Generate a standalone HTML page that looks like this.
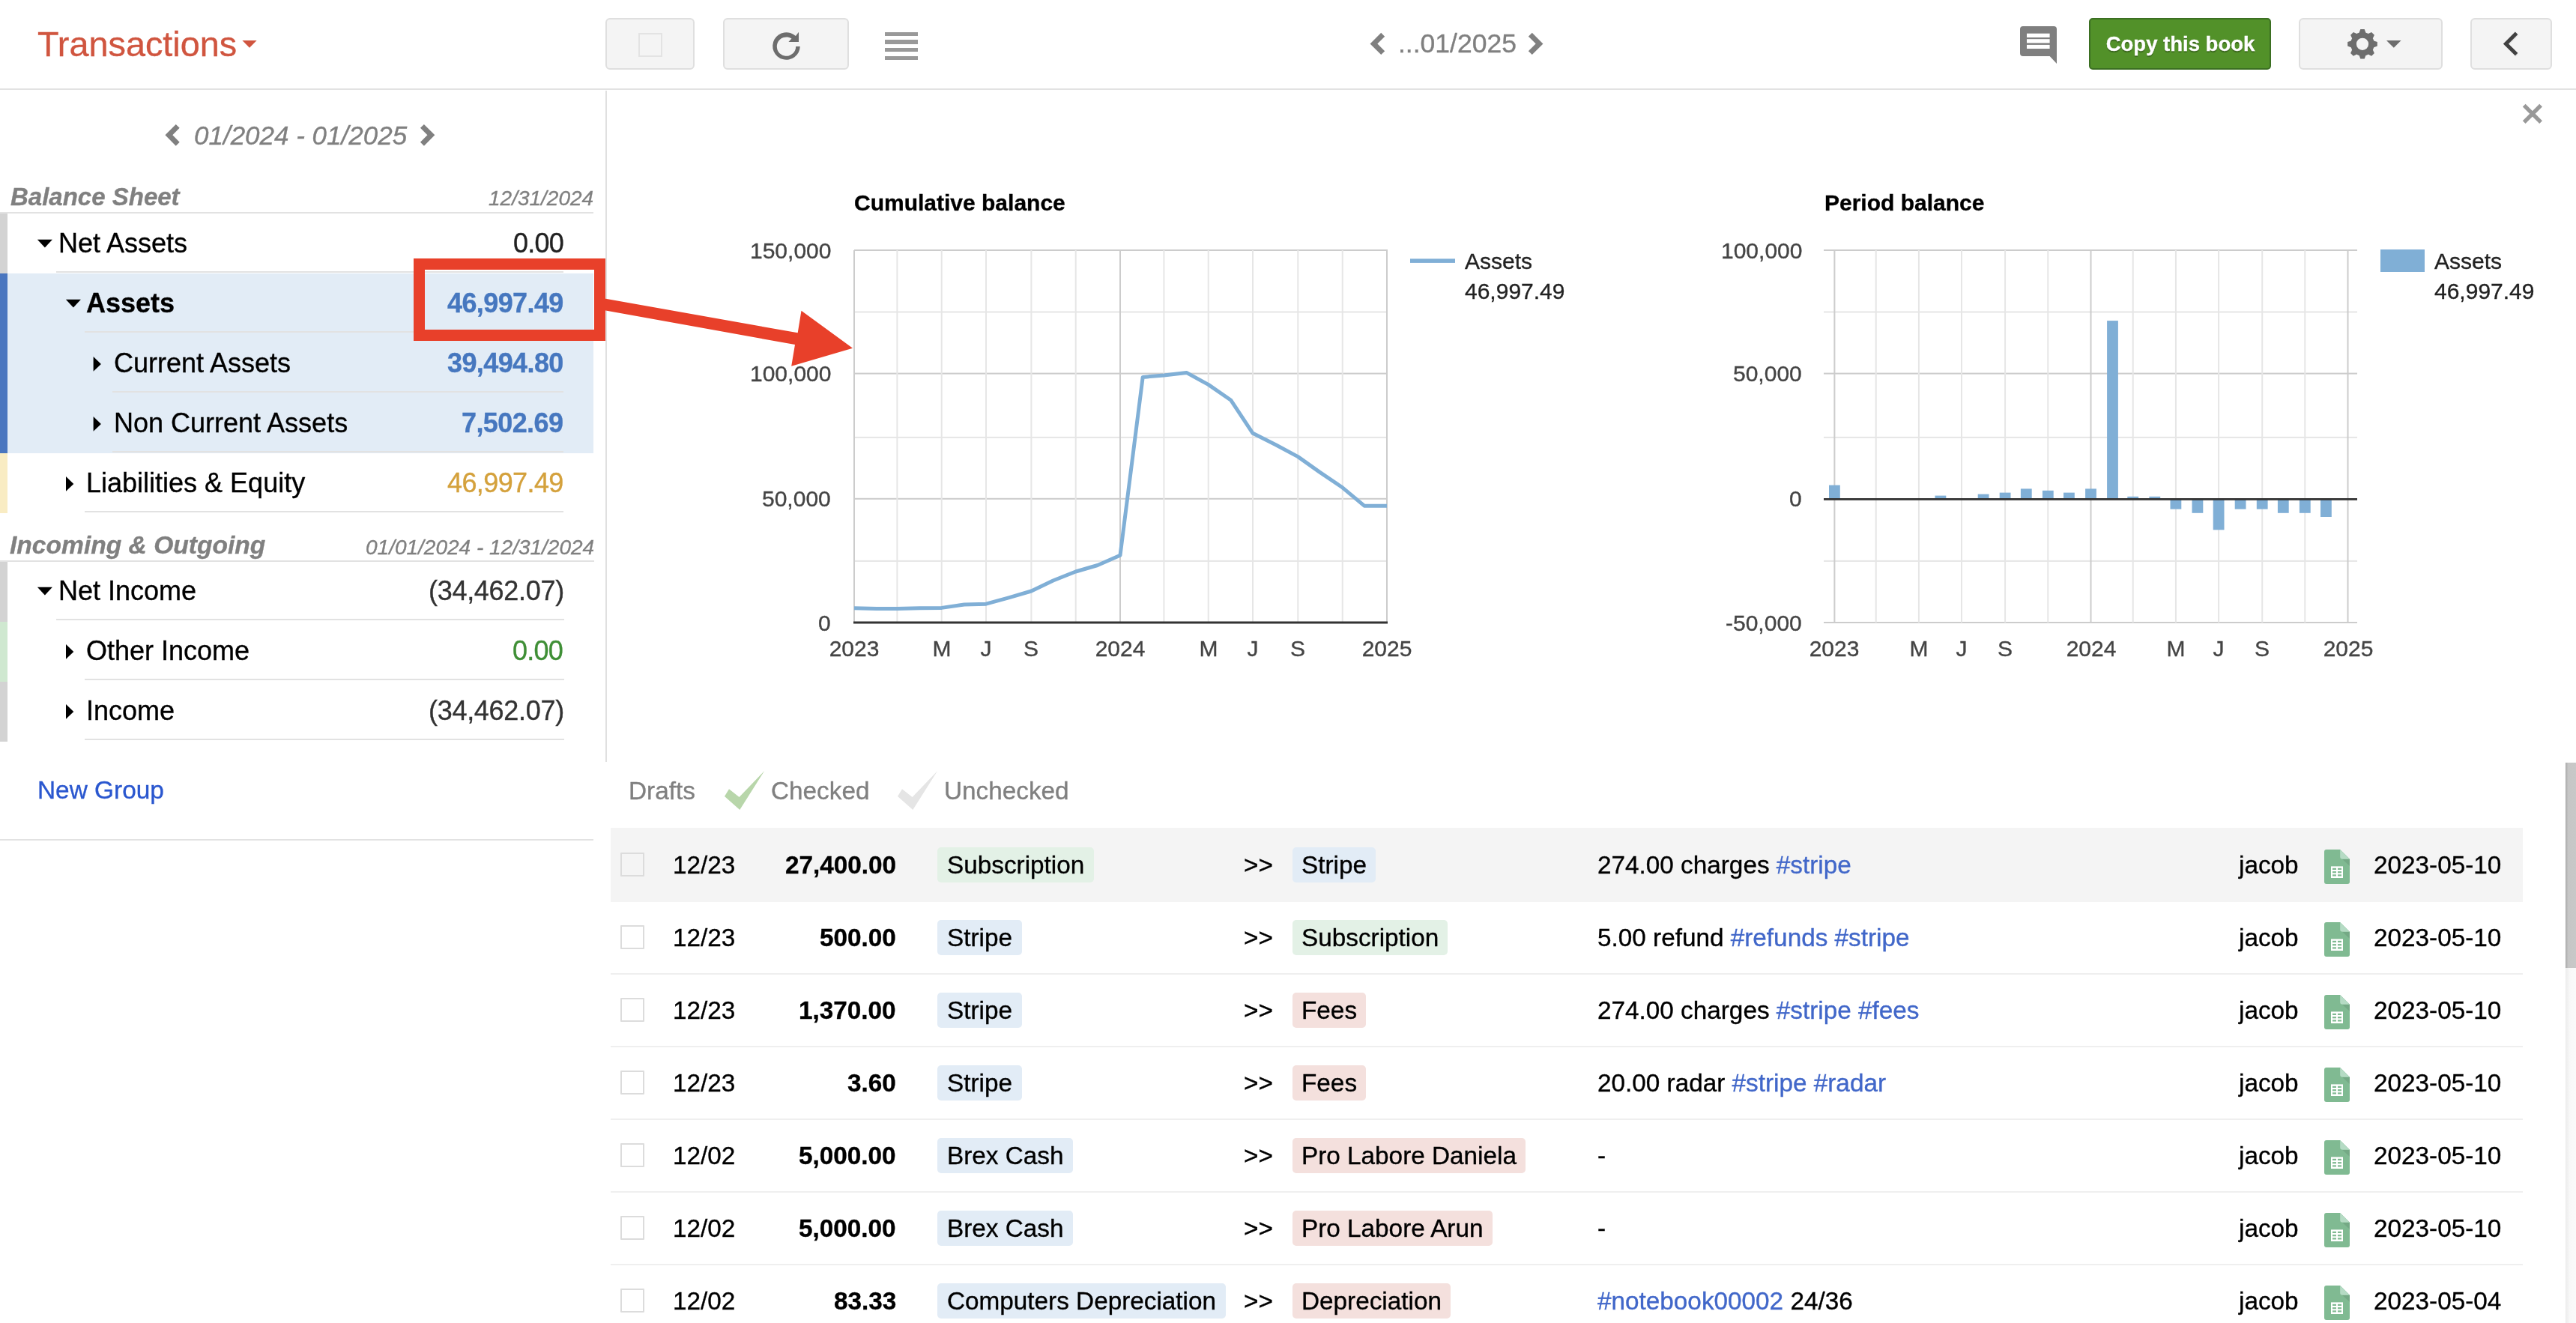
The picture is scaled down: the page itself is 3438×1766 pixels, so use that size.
<!DOCTYPE html><html><head><meta charset="utf-8"><style>
html,body{margin:0;padding:0;width:3438px;height:1766px;overflow:hidden;background:#fff;}
body{position:relative;font-family:"Liberation Sans",sans-serif;}
.t{position:absolute;white-space:nowrap;will-change:transform;-webkit-text-stroke:0.35px currentColor;}
.r{position:absolute;}
svg{position:absolute;left:0;top:0;}
</style></head><body>
<div class="t" style="left:50.0px;top:35.6px;font-size:46.8px;line-height:46.8px;color:#d0553f;font-weight:normal;font-style:normal;">Transactions</div>
<svg width="3438" height="125" style="left:0;top:0"><polygon points="323.4,54 342.6,54 333,63.7" fill="#d0553f"/></svg>
<div class="r" style="left:0px;top:118px;width:3438px;height:2px;background:#e2e2e2;"></div>
<div class="r" style="left:808px;top:24px;width:119px;height:69px;background:#f4f4f4;box-sizing:border-box;border:2px solid #dfdfdf;border-radius:6px;"></div>
<div class="r" style="left:851.5px;top:43.5px;width:32px;height:32px;background:transparent;box-sizing:border-box;border:2px solid #e3e3e3;"></div>
<div class="r" style="left:964.5px;top:24px;width:168px;height:69px;background:#f4f4f4;box-sizing:border-box;border:2px solid #dfdfdf;border-radius:6px;"></div>
<svg width="3438" height="125" style="left:0;top:0"><path d="M1067.8,62 A18.3,18.3 0 1 1 1062,48.1 L1066,42.7 L1066,56 L1052.4,56 L1056.5,51.5 A12.7,12.7 0 1 0 1062.2,62 Z" fill="#6d6d6d"/></svg>
<div class="r" style="left:1181.3px;top:42.7px;width:43.3px;height:5.3px;background:#999999;"></div>
<div class="r" style="left:1181.3px;top:53.4px;width:43.3px;height:5.3px;background:#999999;"></div>
<div class="r" style="left:1181.3px;top:64.1px;width:43.3px;height:5.3px;background:#999999;"></div>
<div class="r" style="left:1181.3px;top:74.8px;width:43.3px;height:5.3px;background:#999999;"></div>
<svg width="3438" height="125" style="left:0;top:0"><polyline points="1845.7,46.2 1833.5,58.4 1845.7,70.6" fill="none" stroke="#808080" stroke-width="7" stroke-linecap="butt"/><polyline points="2042.3,46.2 2054.5,58.4 2042.3,70.6" fill="none" stroke="#808080" stroke-width="7" stroke-linecap="butt"/></svg>
<div class="t" style="left:1866.2px;top:40.7px;font-size:35.5px;line-height:35.5px;color:#808080;font-weight:normal;font-style:normal;">...01/2025</div>
<svg width="3438" height="125" style="left:0;top:0"><path d="M2700,35 H2741 A4,4 0 0 1 2745,39 V85 L2735.6,75 H2700 A4,4 0 0 1 2696,71 V39 A4,4 0 0 1 2700,35 Z" fill="#7f7f7f"/><rect x="2705" y="44.7" width="30.6" height="5.3" fill="#fff"/><rect x="2705" y="52.2" width="30.6" height="5.2" fill="#fff"/><rect x="2705" y="59.9" width="30.6" height="5.1" fill="#fff"/></svg>
<div class="r" style="left:2788px;top:24px;width:243px;height:69px;background:#529129;box-sizing:border-box;border:2px solid #3b6f22;border-radius:5px;"></div>
<div class="t" style="left:1909.5px;width:2000px;text-align:center;top:45.2px;font-size:27.5px;line-height:27.5px;color:#ffffff;font-weight:bold;font-style:normal;text-shadow:0 1.5px 1px rgba(0,0,0,0.3);">Copy this book</div>
<div class="r" style="left:3068px;top:24px;width:192px;height:69px;background:#f4f4f4;box-sizing:border-box;border:2px solid #dfdfdf;border-radius:6px;"></div>
<svg width="3438" height="125" style="left:0;top:0"><polygon points="3148.64,43.61 3150.32,38.98 3155.68,38.98 3157.36,43.61 3158.21,43.88 3159.05,44.20 3159.86,44.57 3160.66,44.98 3165.12,42.89 3168.91,46.68 3166.82,51.14 3167.23,51.94 3167.60,52.75 3167.92,53.59 3168.19,54.44 3172.82,56.12 3172.82,61.48 3168.19,63.16 3167.92,64.01 3167.60,64.85 3167.23,65.66 3166.82,66.46 3168.91,70.92 3165.12,74.71 3160.66,72.62 3159.86,73.03 3159.05,73.40 3158.21,73.72 3157.36,73.99 3155.68,78.62 3150.32,78.62 3148.64,73.99 3147.79,73.72 3146.95,73.40 3146.14,73.03 3145.34,72.62 3140.88,74.71 3137.09,70.92 3139.18,66.46 3138.77,65.66 3138.40,64.85 3138.08,64.01 3137.81,63.16 3133.18,61.48 3133.18,56.12 3137.81,54.44 3138.08,53.59 3138.40,52.75 3138.77,51.94 3139.18,51.14 3137.09,46.68 3140.88,42.89 3145.34,44.98 3146.14,44.57 3146.95,44.20 3147.79,43.88" fill="#6d6d6d"/><circle cx="3153" cy="58.8" r="8.1" fill="#f4f4f4"/><polygon points="3185,54 3204.6,54 3194.8,63.8" fill="#6d6d6d"/></svg>
<div class="r" style="left:3297px;top:24px;width:109px;height:69px;background:#f4f4f4;box-sizing:border-box;border:2px solid #dfdfdf;border-radius:6px;"></div>
<svg width="3438" height="125" style="left:0;top:0"><polyline points="3359.5,45.5 3345.3,59.7 3359.5,73.9" fill="none" stroke="rgba(0,0,0,0.06)" stroke-width="5"/><polyline points="3358.6,44.2 3344.4,58.4 3358.6,72.6" fill="none" stroke="#414141" stroke-width="5"/></svg>
<div class="r" style="left:808px;top:121px;width:2px;height:896px;background:#e0e0e0;"></div>
<svg width="820" height="260" style="left:0;top:0"><polyline points="237.2,168.4 225.35,180.3 237.2,192.2" fill="none" stroke="#808080" stroke-width="7"/><polyline points="563.45,168.4 575.35,180.3 563.45,192.2" fill="none" stroke="#808080" stroke-width="7"/></svg>
<div class="t" style="left:259.0px;top:163.2px;font-size:35px;line-height:35px;color:#808080;font-weight:normal;font-style:italic;">01/2024 - 01/2025</div>
<div class="t" style="left:14.0px;top:246.1px;font-size:33px;line-height:33px;color:#808080;font-weight:bold;font-style:italic;">Balance Sheet</div>
<div class="t" style="right:2646.0px;top:250.8px;font-size:28px;line-height:28px;color:#808080;font-weight:normal;font-style:italic;">12/31/2024</div>
<div class="r" style="left:0px;top:283px;width:792px;height:2px;background:#e2e2e2;"></div>
<div class="r" style="left:0px;top:285px;width:10px;height:80px;background:#d3d3d3;"></div>
<div class="r" style="left:0px;top:365px;width:10px;height:240px;background:#4a76bf;"></div>
<div class="r" style="left:10px;top:365px;width:782px;height:240px;background:#e2ecf6;"></div>
<div class="r" style="left:0px;top:605px;width:10px;height:80px;background:#f9ecc3;"></div>
<div class="t" style="left:78.0px;top:306.5px;font-size:36px;line-height:36px;color:#000;font-weight:normal;font-style:normal;">Net Assets</div>
<div class="t" style="right:2686.2px;top:306.5px;font-size:36px;line-height:36px;color:#222;font-weight:normal;font-style:normal;letter-spacing:-0.8px;">0.00</div>
<div class="r" style="left:75px;top:362px;width:677px;height:2px;background:#e2e2e2;"></div>
<div class="t" style="left:115.0px;top:386.5px;font-size:36px;line-height:36px;color:#000;font-weight:bold;font-style:normal;">Assets</div>
<div class="t" style="right:2686.2px;top:386.5px;font-size:36px;line-height:36px;color:#4677bf;font-weight:bold;font-style:normal;letter-spacing:-0.6px;">46,997.49</div>
<div class="r" style="left:113px;top:442px;width:639px;height:2px;background:#e2e2e2;"></div>
<div class="t" style="left:152.0px;top:466.5px;font-size:36px;line-height:36px;color:#000;font-weight:normal;font-style:normal;">Current Assets</div>
<div class="t" style="right:2686.2px;top:466.5px;font-size:36px;line-height:36px;color:#4677bf;font-weight:bold;font-style:normal;letter-spacing:-0.6px;">39,494.80</div>
<div class="r" style="left:150px;top:522px;width:602px;height:2px;background:#e2e2e2;"></div>
<div class="t" style="left:152.0px;top:546.5px;font-size:36px;line-height:36px;color:#000;font-weight:normal;font-style:normal;">Non Current Assets</div>
<div class="t" style="right:2686.2px;top:546.5px;font-size:36px;line-height:36px;color:#4677bf;font-weight:bold;font-style:normal;letter-spacing:-0.6px;">7,502.69</div>
<div class="r" style="left:150px;top:602px;width:602px;height:2px;background:#e2e2e2;"></div>
<div class="t" style="left:115.0px;top:626.5px;font-size:36px;line-height:36px;color:#000;font-weight:normal;font-style:normal;">Liabilities &amp; Equity</div>
<div class="t" style="right:2686.2px;top:626.5px;font-size:36px;line-height:36px;color:#d4a13c;font-weight:normal;font-style:normal;letter-spacing:-0.6px;">46,997.49</div>
<div class="r" style="left:113px;top:682px;width:639px;height:2px;background:#e2e2e2;"></div>
<div class="t" style="left:13.0px;top:710.6px;font-size:33.6px;line-height:33.6px;color:#808080;font-weight:bold;font-style:italic;">Incoming &amp; Outgoing</div>
<div class="t" style="right:2644.5px;top:716.8px;font-size:28px;line-height:28px;color:#808080;font-weight:normal;font-style:italic;">01/01/2024 - 12/31/2024</div>
<div class="r" style="left:0px;top:748px;width:793px;height:2px;background:#e2e2e2;"></div>
<div class="r" style="left:0px;top:750px;width:10px;height:80px;background:#d3d3d3;"></div>
<div class="r" style="left:0px;top:830px;width:10px;height:80px;background:#cfe8d0;"></div>
<div class="r" style="left:0px;top:910px;width:10px;height:80px;background:#d3d3d3;"></div>
<div class="t" style="left:78.0px;top:770.5px;font-size:36px;line-height:36px;color:#000;font-weight:normal;font-style:normal;">Net Income</div>
<div class="t" style="right:2685.2px;top:770.5px;font-size:36px;line-height:36px;color:#333;font-weight:normal;font-style:normal;letter-spacing:-0.3px;">(34,462.07)</div>
<div class="r" style="left:75px;top:826px;width:678px;height:2px;background:#e2e2e2;"></div>
<div class="t" style="left:115.0px;top:850.5px;font-size:36px;line-height:36px;color:#000;font-weight:normal;font-style:normal;">Other Income</div>
<div class="t" style="right:2686.7px;top:850.5px;font-size:36px;line-height:36px;color:#3f8f36;font-weight:normal;font-style:normal;letter-spacing:-0.8px;">0.00</div>
<div class="r" style="left:113px;top:906px;width:640px;height:2px;background:#e2e2e2;"></div>
<div class="t" style="left:115.0px;top:930.5px;font-size:36px;line-height:36px;color:#000;font-weight:normal;font-style:normal;">Income</div>
<div class="t" style="right:2685.2px;top:930.5px;font-size:36px;line-height:36px;color:#333;font-weight:normal;font-style:normal;letter-spacing:-0.3px;">(34,462.07)</div>
<div class="r" style="left:113px;top:986px;width:640px;height:2px;background:#e2e2e2;"></div>
<svg width="820" height="1000" style="left:0;top:0"><polygon points="49.9,319.8 69.9,319.8 59.9,330.40000000000003" fill="#000"/><polygon points="87.9,399.8 107.9,399.8 97.9,410.40000000000003" fill="#000"/><polygon points="124.6,476 134.9,485.9 124.6,495.8" fill="#000"/><polygon points="124.6,556 134.9,565.9 124.6,575.8" fill="#000"/><polygon points="88,636 98.3,645.9 88,655.8" fill="#000"/><polygon points="49.9,783.8 69.9,783.8 59.9,794.4" fill="#000"/><polygon points="88,860 98.3,869.9 88,879.8" fill="#000"/><polygon points="88,940 98.3,949.9 88,959.8" fill="#000"/></svg>
<div class="t" style="left:50.0px;top:1037.7px;font-size:33.4px;line-height:33.4px;color:#2a57cf;font-weight:normal;font-style:normal;">New Group</div>
<div class="r" style="left:0px;top:1120px;width:792px;height:2px;background:#e2e2e2;"></div>
<div class="r" style="left:552px;top:345px;width:256px;height:110px;background:transparent;box-sizing:border-box;border:15px solid #e8402a;"></div>
<svg width="1200" height="520" style="left:0;top:0"><polygon points="807,398.6 1064.7,444.3 1069.5,414.7 1138,464.8 1056.2,488.8 1061,460 807,414.2" fill="#e8402a"/></svg>
<svg width="3438" height="200" style="left:0;top:0"><path d="M3368.7,140.6 L3391.1,163.2 M3391.1,140.6 L3368.7,163.2" stroke="#999" stroke-width="5.3"/></svg>
<div class="t" style="left:1140.0px;top:255.6px;font-size:30px;line-height:30px;color:#000;font-weight:bold;font-style:normal;">Cumulative balance</div>
<div class="t" style="left:1954.5px;top:334.1px;font-size:30px;line-height:30px;color:#222;font-weight:normal;font-style:normal;">Assets</div>
<div class="t" style="left:1954.5px;top:373.8px;font-size:30px;line-height:30px;color:#222;font-weight:normal;font-style:normal;">46,997.49</div>
<div class="t" style="right:2329.0px;top:319.6px;font-size:30px;line-height:30px;color:#444444;font-weight:normal;font-style:normal;">150,000</div>
<div class="t" style="right:2329.0px;top:484.2px;font-size:30px;line-height:30px;color:#444444;font-weight:normal;font-style:normal;">100,000</div>
<div class="t" style="right:2329.0px;top:651.4px;font-size:30px;line-height:30px;color:#444444;font-weight:normal;font-style:normal;">50,000</div>
<div class="t" style="right:2329.0px;top:816.6px;font-size:30px;line-height:30px;color:#444444;font-weight:normal;font-style:normal;">0</div>
<div class="t" style="left:140.0px;width:2000px;text-align:center;top:851.1px;font-size:30px;line-height:30px;color:#444444;font-weight:normal;font-style:normal;">2023</div>
<div class="t" style="left:256.7px;width:2000px;text-align:center;top:851.1px;font-size:30px;line-height:30px;color:#444444;font-weight:normal;font-style:normal;">M</div>
<div class="t" style="left:316.0px;width:2000px;text-align:center;top:851.1px;font-size:30px;line-height:30px;color:#444444;font-weight:normal;font-style:normal;">J</div>
<div class="t" style="left:376.4px;width:2000px;text-align:center;top:851.1px;font-size:30px;line-height:30px;color:#444444;font-weight:normal;font-style:normal;">S</div>
<div class="t" style="left:495.0px;width:2000px;text-align:center;top:851.1px;font-size:30px;line-height:30px;color:#444444;font-weight:normal;font-style:normal;">2024</div>
<div class="t" style="left:612.7px;width:2000px;text-align:center;top:851.1px;font-size:30px;line-height:30px;color:#444444;font-weight:normal;font-style:normal;">M</div>
<div class="t" style="left:672.0px;width:2000px;text-align:center;top:851.1px;font-size:30px;line-height:30px;color:#444444;font-weight:normal;font-style:normal;">J</div>
<div class="t" style="left:732.3px;width:2000px;text-align:center;top:851.1px;font-size:30px;line-height:30px;color:#444444;font-weight:normal;font-style:normal;">S</div>
<div class="t" style="left:851.0px;width:2000px;text-align:center;top:851.1px;font-size:30px;line-height:30px;color:#444444;font-weight:normal;font-style:normal;">2025</div>
<div class="t" style="left:2435.0px;top:255.6px;font-size:30px;line-height:30px;color:#000;font-weight:bold;font-style:normal;">Period balance</div>
<div class="t" style="left:3248.5px;top:334.1px;font-size:30px;line-height:30px;color:#222;font-weight:normal;font-style:normal;">Assets</div>
<div class="t" style="left:3248.5px;top:373.8px;font-size:30px;line-height:30px;color:#222;font-weight:normal;font-style:normal;">46,997.49</div>
<div class="t" style="right:1033.0px;top:319.6px;font-size:30px;line-height:30px;color:#444444;font-weight:normal;font-style:normal;">100,000</div>
<div class="t" style="right:1033.0px;top:484.2px;font-size:30px;line-height:30px;color:#444444;font-weight:normal;font-style:normal;">50,000</div>
<div class="t" style="right:1033.0px;top:651.4px;font-size:30px;line-height:30px;color:#444444;font-weight:normal;font-style:normal;">0</div>
<div class="t" style="right:1033.0px;top:816.6px;font-size:30px;line-height:30px;color:#444444;font-weight:normal;font-style:normal;">-50,000</div>
<div class="t" style="left:1448.4px;width:2000px;text-align:center;top:851.1px;font-size:30px;line-height:30px;color:#444444;font-weight:normal;font-style:normal;">2023</div>
<div class="t" style="left:1560.9px;width:2000px;text-align:center;top:851.1px;font-size:30px;line-height:30px;color:#444444;font-weight:normal;font-style:normal;">M</div>
<div class="t" style="left:1618.0px;width:2000px;text-align:center;top:851.1px;font-size:30px;line-height:30px;color:#444444;font-weight:normal;font-style:normal;">J</div>
<div class="t" style="left:1676.1px;width:2000px;text-align:center;top:851.1px;font-size:30px;line-height:30px;color:#444444;font-weight:normal;font-style:normal;">S</div>
<div class="t" style="left:1790.5px;width:2000px;text-align:center;top:851.1px;font-size:30px;line-height:30px;color:#444444;font-weight:normal;font-style:normal;">2024</div>
<div class="t" style="left:1903.9px;width:2000px;text-align:center;top:851.1px;font-size:30px;line-height:30px;color:#444444;font-weight:normal;font-style:normal;">M</div>
<div class="t" style="left:1961.1px;width:2000px;text-align:center;top:851.1px;font-size:30px;line-height:30px;color:#444444;font-weight:normal;font-style:normal;">J</div>
<div class="t" style="left:2019.2px;width:2000px;text-align:center;top:851.1px;font-size:30px;line-height:30px;color:#444444;font-weight:normal;font-style:normal;">S</div>
<div class="t" style="left:2133.5px;width:2000px;text-align:center;top:851.1px;font-size:30px;line-height:30px;color:#444444;font-weight:normal;font-style:normal;">2025</div>
<svg width="3438" height="1000" style="left:0;top:0"><rect x="1140" y="333.0" width="712" height="2" fill="#cccccc"/><rect x="1140" y="415.5" width="712" height="2" fill="#e6e6e6"/><rect x="1140" y="497.6" width="712" height="2" fill="#cccccc"/><rect x="1140" y="582.9" width="712" height="2" fill="#e6e6e6"/><rect x="1140" y="664.8" width="712" height="2" fill="#cccccc"/><rect x="1140" y="747.9" width="712" height="2" fill="#e6e6e6"/><rect x="1139.0" y="334" width="2" height="497" fill="#cccccc"/><rect x="1196.4" y="334" width="2" height="497" fill="#e6e6e6"/><rect x="1255.7" y="334" width="2" height="497" fill="#e6e6e6"/><rect x="1315.0" y="334" width="2" height="497" fill="#e6e6e6"/><rect x="1375.4" y="334" width="2" height="497" fill="#e6e6e6"/><rect x="1434.7" y="334" width="2" height="497" fill="#e6e6e6"/><rect x="1494.0" y="334" width="2" height="497" fill="#cccccc"/><rect x="1552.4" y="334" width="2" height="497" fill="#e6e6e6"/><rect x="1611.7" y="334" width="2" height="497" fill="#e6e6e6"/><rect x="1671.0" y="334" width="2" height="497" fill="#e6e6e6"/><rect x="1731.3" y="334" width="2" height="497" fill="#e6e6e6"/><rect x="1790.7" y="334" width="2" height="497" fill="#e6e6e6"/><rect x="1850.0" y="334" width="2" height="497" fill="#cccccc"/><rect x="1139" y="829.5" width="713" height="3" fill="#333"/><polyline points="1140.0,811.8 1170.2,812.6 1197.4,812.6 1227.5,811.8 1256.7,811.4 1286.9,807.0 1316.0,806.2 1346.2,797.8 1376.4,789.0 1405.5,775.0 1435.7,763.0 1464.9,754.5 1495.0,741.3 1525.2,503.4 1553.4,501.0 1583.5,497.4 1612.7,513.4 1642.9,534.3 1672.0,578.3 1702.2,593.5 1732.3,609.6 1761.5,630.4 1791.7,650.8 1820.8,675.2 1851.0,675.2" fill="none" stroke="#80afd6" stroke-width="5" stroke-linejoin="round"/><rect x="1882" y="345.4" width="60" height="5.5" fill="#80afd6"/><rect x="2434" y="333.0" width="712" height="2" fill="#cccccc"/><rect x="2434" y="415.5" width="712" height="2" fill="#e6e6e6"/><rect x="2434" y="497.6" width="712" height="2" fill="#cccccc"/><rect x="2434" y="582.9" width="712" height="2" fill="#e6e6e6"/><rect x="2434" y="747.9" width="712" height="2" fill="#e6e6e6"/><rect x="2434" y="830.0" width="712" height="2" fill="#cccccc"/><rect x="2447.4" y="334" width="2" height="497" fill="#cccccc"/><rect x="2502.7" y="334" width="2" height="497" fill="#e6e6e6"/><rect x="2559.9" y="334" width="2" height="497" fill="#e6e6e6"/><rect x="2617.0" y="334" width="2" height="497" fill="#e6e6e6"/><rect x="2675.1" y="334" width="2" height="497" fill="#e6e6e6"/><rect x="2732.3" y="334" width="2" height="497" fill="#e6e6e6"/><rect x="2789.5" y="334" width="2" height="497" fill="#cccccc"/><rect x="2845.7" y="334" width="2" height="497" fill="#e6e6e6"/><rect x="2902.9" y="334" width="2" height="497" fill="#e6e6e6"/><rect x="2960.1" y="334" width="2" height="497" fill="#e6e6e6"/><rect x="3018.2" y="334" width="2" height="497" fill="#e6e6e6"/><rect x="3075.3" y="334" width="2" height="497" fill="#e6e6e6"/><rect x="3132.5" y="334" width="2" height="497" fill="#cccccc"/><rect x="2441.0" y="647.6" width="14.8" height="18.8" fill="#80afd6"/><rect x="2470.1" y="665.0" width="14.8" height="1.4" fill="#80afd6"/><rect x="2496.3" y="665.0" width="14.8" height="1.4" fill="#80afd6"/><rect x="2525.3" y="665.0" width="14.8" height="1.4" fill="#80afd6"/><rect x="2553.5" y="665.0" width="14.8" height="1.4" fill="#80afd6"/><rect x="2582.5" y="661.6" width="14.8" height="4.8" fill="#80afd6"/><rect x="2610.6" y="665.0" width="14.8" height="1.4" fill="#80afd6"/><rect x="2639.7" y="659.6" width="14.8" height="6.8" fill="#80afd6"/><rect x="2668.7" y="657.6" width="14.8" height="8.8" fill="#80afd6"/><rect x="2696.9" y="652.4" width="14.8" height="14.0" fill="#80afd6"/><rect x="2725.9" y="654.8" width="14.8" height="11.6" fill="#80afd6"/><rect x="2754.0" y="657.6" width="14.8" height="8.8" fill="#80afd6"/><rect x="2783.1" y="652.4" width="14.8" height="14.0" fill="#80afd6"/><rect x="2812.1" y="428.1" width="14.8" height="238.3" fill="#80afd6"/><rect x="2839.3" y="662.8" width="14.8" height="3.6" fill="#80afd6"/><rect x="2868.4" y="662.8" width="14.8" height="3.6" fill="#80afd6"/><rect x="2896.5" y="666.4" width="14.8" height="13.2" fill="#80afd6"/><rect x="2925.5" y="666.4" width="14.8" height="18.4" fill="#80afd6"/><rect x="2953.7" y="666.4" width="14.8" height="40.9" fill="#80afd6"/><rect x="2982.7" y="666.4" width="14.8" height="13.2" fill="#80afd6"/><rect x="3011.8" y="666.4" width="14.8" height="13.2" fill="#80afd6"/><rect x="3039.9" y="666.4" width="14.8" height="18.4" fill="#80afd6"/><rect x="3068.9" y="666.4" width="14.8" height="18.4" fill="#80afd6"/><rect x="3097.0" y="666.4" width="14.8" height="23.6" fill="#80afd6"/><rect x="2434" y="665.0" width="712" height="2.8" fill="#333"/><rect x="3177" y="333" width="59" height="30" fill="#80afd6"/></svg>
<div class="t" style="left:838.5px;top:1038.8px;font-size:33.3px;line-height:33.3px;color:#808080;font-weight:normal;font-style:normal;">Drafts</div>
<svg width="3438" height="1200" style="left:0;top:0"><polygon points="967,1062.9 973,1053.3 986.6,1064.1 1020.2,1028.9 987.3,1081.1" fill="#b8d6aa"/><polygon points="1198,1062.9 1204,1053.3 1217.6,1064.1 1251.2,1028.9 1218.3,1081.1" fill="#e5e5e5"/></svg>
<div class="t" style="left:1029.0px;top:1038.8px;font-size:33.3px;line-height:33.3px;color:#808080;font-weight:normal;font-style:normal;">Checked</div>
<div class="t" style="left:1260.0px;top:1038.8px;font-size:33.3px;line-height:33.3px;color:#808080;font-weight:normal;font-style:normal;">Unchecked</div>
<div class="r" style="left:815px;top:1105px;width:2552px;height:99px;background:#f4f4f4;"></div>
<div class="r" style="left:828px;top:1138px;width:32px;height:32px;background:transparent;box-sizing:border-box;border:2px solid #dcdcdc;border-radius:1px;"></div>
<div class="t" style="left:897.5px;top:1137.8px;font-size:33.3px;line-height:33.3px;color:#000;font-weight:normal;font-style:normal;">12/23</div>
<div class="t" style="right:2242.0px;top:1137.8px;font-size:33.3px;line-height:33.3px;color:#000;font-weight:bold;font-style:normal;">27,400.00</div>
<div class="t" style="left:1251px;top:1130.8px;height:47px;line-height:47px;padding:0 13px;border-radius:5px;background:#e3f1e6;font-size:33.3px;color:#000">Subscription</div>
<div class="t" style="left:1660.0px;top:1137.8px;font-size:33.3px;line-height:33.3px;color:#000;font-weight:normal;font-style:normal;">&gt;&gt;</div>
<div class="t" style="left:1725px;top:1130.8px;height:47px;line-height:47px;padding:0 12px;border-radius:5px;background:#e2ecf6;font-size:33.3px;color:#000">Stripe</div>
<div class="t" style="left:2132.0px;top:1137.8px;font-size:33.3px;line-height:33.3px;color:#000;font-weight:normal;font-style:normal;">274.00 charges <span style="color:#4167c9">#stripe</span></div>
<div class="t" style="left:2988.0px;top:1137.8px;font-size:33.3px;line-height:33.3px;color:#000;font-weight:normal;font-style:normal;">jacob</div>
<div class="t" style="left:3168.0px;top:1137.8px;font-size:33.3px;line-height:33.3px;color:#000;font-weight:normal;font-style:normal;">2023-05-10</div>
<svg width="40" height="50" style="left:3102px;top:1133.8px"><path d="M3,0 H21.2 L34,12.8 V43 A3,3 0 0 1 31,46 H3 A3,3 0 0 1 0,43 V3 A3,3 0 0 1 3,0 Z" fill="#80ba92"/><path d="M24,12.8 H34 V22 Z" fill="#74a985"/><path d="M21.2,0 L34,12.8 H24.5 A3.3,3.3 0 0 1 21.2,9.5 Z" fill="#b5dbc4"/><rect x="9" y="22.4" width="16" height="15.6" fill="#fff"/><rect x="11" y="24.8" width="5" height="2.2" fill="#80ba92"/><rect x="18" y="24.8" width="5" height="2.2" fill="#80ba92"/><rect x="11" y="29.1" width="5" height="2.2" fill="#80ba92"/><rect x="18" y="29.1" width="5" height="2.2" fill="#80ba92"/><rect x="11" y="33.3" width="5" height="2.2" fill="#80ba92"/><rect x="18" y="33.3" width="5" height="2.2" fill="#80ba92"/></svg>
<div class="r" style="left:815px;top:1299px;width:2552px;height:2px;background:#efefef;"></div>
<div class="r" style="left:828px;top:1235px;width:32px;height:32px;background:transparent;box-sizing:border-box;border:2px solid #dcdcdc;border-radius:1px;"></div>
<div class="t" style="left:897.5px;top:1234.8px;font-size:33.3px;line-height:33.3px;color:#000;font-weight:normal;font-style:normal;">12/23</div>
<div class="t" style="right:2242.0px;top:1234.8px;font-size:33.3px;line-height:33.3px;color:#000;font-weight:bold;font-style:normal;">500.00</div>
<div class="t" style="left:1251px;top:1227.8px;height:47px;line-height:47px;padding:0 13px;border-radius:5px;background:#e2ecf6;font-size:33.3px;color:#000">Stripe</div>
<div class="t" style="left:1660.0px;top:1234.8px;font-size:33.3px;line-height:33.3px;color:#000;font-weight:normal;font-style:normal;">&gt;&gt;</div>
<div class="t" style="left:1725px;top:1227.8px;height:47px;line-height:47px;padding:0 12px;border-radius:5px;background:#e3f1e6;font-size:33.3px;color:#000">Subscription</div>
<div class="t" style="left:2132.0px;top:1234.8px;font-size:33.3px;line-height:33.3px;color:#000;font-weight:normal;font-style:normal;">5.00 refund <span style="color:#4167c9">#refunds #stripe</span></div>
<div class="t" style="left:2988.0px;top:1234.8px;font-size:33.3px;line-height:33.3px;color:#000;font-weight:normal;font-style:normal;">jacob</div>
<div class="t" style="left:3168.0px;top:1234.8px;font-size:33.3px;line-height:33.3px;color:#000;font-weight:normal;font-style:normal;">2023-05-10</div>
<svg width="40" height="50" style="left:3102px;top:1230.8px"><path d="M3,0 H21.2 L34,12.8 V43 A3,3 0 0 1 31,46 H3 A3,3 0 0 1 0,43 V3 A3,3 0 0 1 3,0 Z" fill="#80ba92"/><path d="M24,12.8 H34 V22 Z" fill="#74a985"/><path d="M21.2,0 L34,12.8 H24.5 A3.3,3.3 0 0 1 21.2,9.5 Z" fill="#b5dbc4"/><rect x="9" y="22.4" width="16" height="15.6" fill="#fff"/><rect x="11" y="24.8" width="5" height="2.2" fill="#80ba92"/><rect x="18" y="24.8" width="5" height="2.2" fill="#80ba92"/><rect x="11" y="29.1" width="5" height="2.2" fill="#80ba92"/><rect x="18" y="29.1" width="5" height="2.2" fill="#80ba92"/><rect x="11" y="33.3" width="5" height="2.2" fill="#80ba92"/><rect x="18" y="33.3" width="5" height="2.2" fill="#80ba92"/></svg>
<div class="r" style="left:815px;top:1396px;width:2552px;height:2px;background:#efefef;"></div>
<div class="r" style="left:828px;top:1332px;width:32px;height:32px;background:transparent;box-sizing:border-box;border:2px solid #dcdcdc;border-radius:1px;"></div>
<div class="t" style="left:897.5px;top:1331.8px;font-size:33.3px;line-height:33.3px;color:#000;font-weight:normal;font-style:normal;">12/23</div>
<div class="t" style="right:2242.0px;top:1331.8px;font-size:33.3px;line-height:33.3px;color:#000;font-weight:bold;font-style:normal;">1,370.00</div>
<div class="t" style="left:1251px;top:1324.8px;height:47px;line-height:47px;padding:0 13px;border-radius:5px;background:#e2ecf6;font-size:33.3px;color:#000">Stripe</div>
<div class="t" style="left:1660.0px;top:1331.8px;font-size:33.3px;line-height:33.3px;color:#000;font-weight:normal;font-style:normal;">&gt;&gt;</div>
<div class="t" style="left:1725px;top:1324.8px;height:47px;line-height:47px;padding:0 12px;border-radius:5px;background:#f4e0dd;font-size:33.3px;color:#000">Fees</div>
<div class="t" style="left:2132.0px;top:1331.8px;font-size:33.3px;line-height:33.3px;color:#000;font-weight:normal;font-style:normal;">274.00 charges <span style="color:#4167c9">#stripe #fees</span></div>
<div class="t" style="left:2988.0px;top:1331.8px;font-size:33.3px;line-height:33.3px;color:#000;font-weight:normal;font-style:normal;">jacob</div>
<div class="t" style="left:3168.0px;top:1331.8px;font-size:33.3px;line-height:33.3px;color:#000;font-weight:normal;font-style:normal;">2023-05-10</div>
<svg width="40" height="50" style="left:3102px;top:1327.8px"><path d="M3,0 H21.2 L34,12.8 V43 A3,3 0 0 1 31,46 H3 A3,3 0 0 1 0,43 V3 A3,3 0 0 1 3,0 Z" fill="#80ba92"/><path d="M24,12.8 H34 V22 Z" fill="#74a985"/><path d="M21.2,0 L34,12.8 H24.5 A3.3,3.3 0 0 1 21.2,9.5 Z" fill="#b5dbc4"/><rect x="9" y="22.4" width="16" height="15.6" fill="#fff"/><rect x="11" y="24.8" width="5" height="2.2" fill="#80ba92"/><rect x="18" y="24.8" width="5" height="2.2" fill="#80ba92"/><rect x="11" y="29.1" width="5" height="2.2" fill="#80ba92"/><rect x="18" y="29.1" width="5" height="2.2" fill="#80ba92"/><rect x="11" y="33.3" width="5" height="2.2" fill="#80ba92"/><rect x="18" y="33.3" width="5" height="2.2" fill="#80ba92"/></svg>
<div class="r" style="left:815px;top:1493px;width:2552px;height:2px;background:#efefef;"></div>
<div class="r" style="left:828px;top:1429px;width:32px;height:32px;background:transparent;box-sizing:border-box;border:2px solid #dcdcdc;border-radius:1px;"></div>
<div class="t" style="left:897.5px;top:1428.8px;font-size:33.3px;line-height:33.3px;color:#000;font-weight:normal;font-style:normal;">12/23</div>
<div class="t" style="right:2242.0px;top:1428.8px;font-size:33.3px;line-height:33.3px;color:#000;font-weight:bold;font-style:normal;">3.60</div>
<div class="t" style="left:1251px;top:1421.8px;height:47px;line-height:47px;padding:0 13px;border-radius:5px;background:#e2ecf6;font-size:33.3px;color:#000">Stripe</div>
<div class="t" style="left:1660.0px;top:1428.8px;font-size:33.3px;line-height:33.3px;color:#000;font-weight:normal;font-style:normal;">&gt;&gt;</div>
<div class="t" style="left:1725px;top:1421.8px;height:47px;line-height:47px;padding:0 12px;border-radius:5px;background:#f4e0dd;font-size:33.3px;color:#000">Fees</div>
<div class="t" style="left:2132.0px;top:1428.8px;font-size:33.3px;line-height:33.3px;color:#000;font-weight:normal;font-style:normal;">20.00 radar <span style="color:#4167c9">#stripe #radar</span></div>
<div class="t" style="left:2988.0px;top:1428.8px;font-size:33.3px;line-height:33.3px;color:#000;font-weight:normal;font-style:normal;">jacob</div>
<div class="t" style="left:3168.0px;top:1428.8px;font-size:33.3px;line-height:33.3px;color:#000;font-weight:normal;font-style:normal;">2023-05-10</div>
<svg width="40" height="50" style="left:3102px;top:1424.8px"><path d="M3,0 H21.2 L34,12.8 V43 A3,3 0 0 1 31,46 H3 A3,3 0 0 1 0,43 V3 A3,3 0 0 1 3,0 Z" fill="#80ba92"/><path d="M24,12.8 H34 V22 Z" fill="#74a985"/><path d="M21.2,0 L34,12.8 H24.5 A3.3,3.3 0 0 1 21.2,9.5 Z" fill="#b5dbc4"/><rect x="9" y="22.4" width="16" height="15.6" fill="#fff"/><rect x="11" y="24.8" width="5" height="2.2" fill="#80ba92"/><rect x="18" y="24.8" width="5" height="2.2" fill="#80ba92"/><rect x="11" y="29.1" width="5" height="2.2" fill="#80ba92"/><rect x="18" y="29.1" width="5" height="2.2" fill="#80ba92"/><rect x="11" y="33.3" width="5" height="2.2" fill="#80ba92"/><rect x="18" y="33.3" width="5" height="2.2" fill="#80ba92"/></svg>
<div class="r" style="left:815px;top:1590px;width:2552px;height:2px;background:#efefef;"></div>
<div class="r" style="left:828px;top:1526px;width:32px;height:32px;background:transparent;box-sizing:border-box;border:2px solid #dcdcdc;border-radius:1px;"></div>
<div class="t" style="left:897.5px;top:1525.8px;font-size:33.3px;line-height:33.3px;color:#000;font-weight:normal;font-style:normal;">12/02</div>
<div class="t" style="right:2242.0px;top:1525.8px;font-size:33.3px;line-height:33.3px;color:#000;font-weight:bold;font-style:normal;">5,000.00</div>
<div class="t" style="left:1251px;top:1518.8px;height:47px;line-height:47px;padding:0 13px;border-radius:5px;background:#e2ecf6;font-size:33.3px;color:#000">Brex Cash</div>
<div class="t" style="left:1660.0px;top:1525.8px;font-size:33.3px;line-height:33.3px;color:#000;font-weight:normal;font-style:normal;">&gt;&gt;</div>
<div class="t" style="left:1725px;top:1518.8px;height:47px;line-height:47px;padding:0 12px;border-radius:5px;background:#f4e0dd;font-size:33.3px;color:#000">Pro Labore Daniela</div>
<div class="t" style="left:2132.0px;top:1525.8px;font-size:33.3px;line-height:33.3px;color:#000;font-weight:normal;font-style:normal;">-</div>
<div class="t" style="left:2988.0px;top:1525.8px;font-size:33.3px;line-height:33.3px;color:#000;font-weight:normal;font-style:normal;">jacob</div>
<div class="t" style="left:3168.0px;top:1525.8px;font-size:33.3px;line-height:33.3px;color:#000;font-weight:normal;font-style:normal;">2023-05-10</div>
<svg width="40" height="50" style="left:3102px;top:1521.8px"><path d="M3,0 H21.2 L34,12.8 V43 A3,3 0 0 1 31,46 H3 A3,3 0 0 1 0,43 V3 A3,3 0 0 1 3,0 Z" fill="#80ba92"/><path d="M24,12.8 H34 V22 Z" fill="#74a985"/><path d="M21.2,0 L34,12.8 H24.5 A3.3,3.3 0 0 1 21.2,9.5 Z" fill="#b5dbc4"/><rect x="9" y="22.4" width="16" height="15.6" fill="#fff"/><rect x="11" y="24.8" width="5" height="2.2" fill="#80ba92"/><rect x="18" y="24.8" width="5" height="2.2" fill="#80ba92"/><rect x="11" y="29.1" width="5" height="2.2" fill="#80ba92"/><rect x="18" y="29.1" width="5" height="2.2" fill="#80ba92"/><rect x="11" y="33.3" width="5" height="2.2" fill="#80ba92"/><rect x="18" y="33.3" width="5" height="2.2" fill="#80ba92"/></svg>
<div class="r" style="left:815px;top:1687px;width:2552px;height:2px;background:#efefef;"></div>
<div class="r" style="left:828px;top:1623px;width:32px;height:32px;background:transparent;box-sizing:border-box;border:2px solid #dcdcdc;border-radius:1px;"></div>
<div class="t" style="left:897.5px;top:1622.8px;font-size:33.3px;line-height:33.3px;color:#000;font-weight:normal;font-style:normal;">12/02</div>
<div class="t" style="right:2242.0px;top:1622.8px;font-size:33.3px;line-height:33.3px;color:#000;font-weight:bold;font-style:normal;">5,000.00</div>
<div class="t" style="left:1251px;top:1615.8px;height:47px;line-height:47px;padding:0 13px;border-radius:5px;background:#e2ecf6;font-size:33.3px;color:#000">Brex Cash</div>
<div class="t" style="left:1660.0px;top:1622.8px;font-size:33.3px;line-height:33.3px;color:#000;font-weight:normal;font-style:normal;">&gt;&gt;</div>
<div class="t" style="left:1725px;top:1615.8px;height:47px;line-height:47px;padding:0 12px;border-radius:5px;background:#f4e0dd;font-size:33.3px;color:#000">Pro Labore Arun</div>
<div class="t" style="left:2132.0px;top:1622.8px;font-size:33.3px;line-height:33.3px;color:#000;font-weight:normal;font-style:normal;">-</div>
<div class="t" style="left:2988.0px;top:1622.8px;font-size:33.3px;line-height:33.3px;color:#000;font-weight:normal;font-style:normal;">jacob</div>
<div class="t" style="left:3168.0px;top:1622.8px;font-size:33.3px;line-height:33.3px;color:#000;font-weight:normal;font-style:normal;">2023-05-10</div>
<svg width="40" height="50" style="left:3102px;top:1618.8px"><path d="M3,0 H21.2 L34,12.8 V43 A3,3 0 0 1 31,46 H3 A3,3 0 0 1 0,43 V3 A3,3 0 0 1 3,0 Z" fill="#80ba92"/><path d="M24,12.8 H34 V22 Z" fill="#74a985"/><path d="M21.2,0 L34,12.8 H24.5 A3.3,3.3 0 0 1 21.2,9.5 Z" fill="#b5dbc4"/><rect x="9" y="22.4" width="16" height="15.6" fill="#fff"/><rect x="11" y="24.8" width="5" height="2.2" fill="#80ba92"/><rect x="18" y="24.8" width="5" height="2.2" fill="#80ba92"/><rect x="11" y="29.1" width="5" height="2.2" fill="#80ba92"/><rect x="18" y="29.1" width="5" height="2.2" fill="#80ba92"/><rect x="11" y="33.3" width="5" height="2.2" fill="#80ba92"/><rect x="18" y="33.3" width="5" height="2.2" fill="#80ba92"/></svg>
<div class="r" style="left:815px;top:1784px;width:2552px;height:2px;background:#efefef;"></div>
<div class="r" style="left:828px;top:1720px;width:32px;height:32px;background:transparent;box-sizing:border-box;border:2px solid #dcdcdc;border-radius:1px;"></div>
<div class="t" style="left:897.5px;top:1719.8px;font-size:33.3px;line-height:33.3px;color:#000;font-weight:normal;font-style:normal;">12/02</div>
<div class="t" style="right:2242.0px;top:1719.8px;font-size:33.3px;line-height:33.3px;color:#000;font-weight:bold;font-style:normal;">83.33</div>
<div class="t" style="left:1251px;top:1712.8px;height:47px;line-height:47px;padding:0 13px;border-radius:5px;background:#e2ecf6;font-size:33.3px;color:#000">Computers Depreciation</div>
<div class="t" style="left:1660.0px;top:1719.8px;font-size:33.3px;line-height:33.3px;color:#000;font-weight:normal;font-style:normal;">&gt;&gt;</div>
<div class="t" style="left:1725px;top:1712.8px;height:47px;line-height:47px;padding:0 12px;border-radius:5px;background:#f4e0dd;font-size:33.3px;color:#000">Depreciation</div>
<div class="t" style="left:2132.0px;top:1719.8px;font-size:33.3px;line-height:33.3px;color:#000;font-weight:normal;font-style:normal;"><span style="color:#4167c9">#notebook00002</span> 24/36</div>
<div class="t" style="left:2988.0px;top:1719.8px;font-size:33.3px;line-height:33.3px;color:#000;font-weight:normal;font-style:normal;">jacob</div>
<div class="t" style="left:3168.0px;top:1719.8px;font-size:33.3px;line-height:33.3px;color:#000;font-weight:normal;font-style:normal;">2023-05-04</div>
<svg width="40" height="50" style="left:3102px;top:1715.8px"><path d="M3,0 H21.2 L34,12.8 V43 A3,3 0 0 1 31,46 H3 A3,3 0 0 1 0,43 V3 A3,3 0 0 1 3,0 Z" fill="#80ba92"/><path d="M24,12.8 H34 V22 Z" fill="#74a985"/><path d="M21.2,0 L34,12.8 H24.5 A3.3,3.3 0 0 1 21.2,9.5 Z" fill="#b5dbc4"/><rect x="9" y="22.4" width="16" height="15.6" fill="#fff"/><rect x="11" y="24.8" width="5" height="2.2" fill="#80ba92"/><rect x="18" y="24.8" width="5" height="2.2" fill="#80ba92"/><rect x="11" y="29.1" width="5" height="2.2" fill="#80ba92"/><rect x="18" y="29.1" width="5" height="2.2" fill="#80ba92"/><rect x="11" y="33.3" width="5" height="2.2" fill="#80ba92"/><rect x="18" y="33.3" width="5" height="2.2" fill="#80ba92"/></svg>
<div class="r" style="left:3424px;top:1018px;width:14px;height:748px;background:linear-gradient(to right,#ececec,#f8f8f8 40%,#fafafa);"></div>
<div class="r" style="left:3424px;top:1018px;width:14px;height:274px;background:linear-gradient(to right,#a9a9a9,#c6c6c6 25%,#c8c8c8);"></div>
</body></html>
